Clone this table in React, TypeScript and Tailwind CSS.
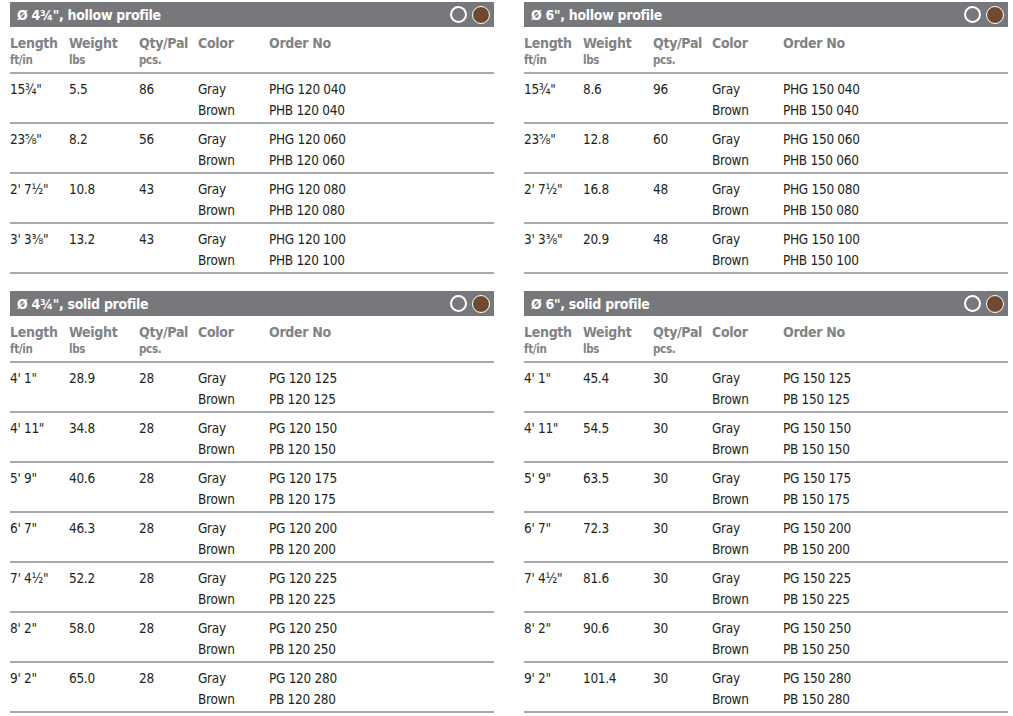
type Row = { len: string; wt: string; qty: string; g: string; b: string };

type Table = { title: string; rows: Row[] };

const mk = (len: string, wt: string, qty: string, g: string, b: string): Row => ({ len, wt, qty, g, b });

const left: Table[] = [
  {
    title: "Ø 4¾\", hollow profile",
    rows: [
      mk("15¾\"", "5.5", "86", "PHG 120 040", "PHB 120 040"),
      mk("23⅝\"", "8.2", "56", "PHG 120 060", "PHB 120 060"),
      mk("2' 7½\"", "10.8", "43", "PHG 120 080", "PHB 120 080"),
      mk("3' 3⅜\"", "13.2", "43", "PHG 120 100", "PHB 120 100"),
    ],
  },
  {
    title: "Ø 4¾\", solid profile",
    rows: [
      mk("4' 1\"", "28.9", "28", "PG 120 125", "PB 120 125"),
      mk("4' 11\"", "34.8", "28", "PG 120 150", "PB 120 150"),
      mk("5' 9\"", "40.6", "28", "PG 120 175", "PB 120 175"),
      mk("6' 7\"", "46.3", "28", "PG 120 200", "PB 120 200"),
      mk("7' 4½\"", "52.2", "28", "PG 120 225", "PB 120 225"),
      mk("8' 2\"", "58.0", "28", "PG 120 250", "PB 120 250"),
      mk("9' 2\"", "65.0", "28", "PG 120 280", "PB 120 280"),
    ],
  },
];

const right: Table[] = [
  {
    title: "Ø 6\", hollow profile",
    rows: [
      mk("15¾\"", "8.6", "96", "PHG 150 040", "PHB 150 040"),
      mk("23⅝\"", "12.8", "60", "PHG 150 060", "PHB 150 060"),
      mk("2' 7½\"", "16.8", "48", "PHG 150 080", "PHB 150 080"),
      mk("3' 3⅜\"", "20.9", "48", "PHG 150 100", "PHB 150 100"),
    ],
  },
  {
    title: "Ø 6\", solid profile",
    rows: [
      mk("4' 1\"", "45.4", "30", "PG 150 125", "PB 150 125"),
      mk("4' 11\"", "54.5", "30", "PG 150 150", "PB 150 150"),
      mk("5' 9\"", "63.5", "30", "PG 150 175", "PB 150 175"),
      mk("6' 7\"", "72.3", "30", "PG 150 200", "PB 150 200"),
      mk("7' 4½\"", "81.6", "30", "PG 150 225", "PB 150 225"),
      mk("8' 2\"", "90.6", "30", "PG 150 250", "PB 150 250"),
      mk("9' 2\"", "101.4", "30", "PG 150 280", "PB 150 280"),
    ],
  },
];

const cols = "grid grid-cols-[59px_70px_59px_71px_1fr]";

function ProfileTable({ t }: { t: Table }) {
  return (
    <section>
      <div className="h-[25px] bg-[#77787b] flex items-center justify-between pl-[7px] pr-[4px]">
        <h2 className="text-white font-bold text-[14px] tracking-[-0.3px] leading-none">{t.title}</h2>
        <div className="flex items-center gap-[5px]">
          <span className="size-[17px] rounded-full border-2 border-white bg-[#77787b]" />
          <span className="size-[18px] rounded-full border border-white bg-[#6f4a30]" />
        </div>
      </div>

      {/* column labels */}
      <div className={`${cols} h-[47px] pt-[8px] border-b-2 border-[#a7a9ac] text-[#808285] font-bold tracking-[-0.3px]`}>
        <div className="leading-[17px]"><div className="text-[14px]">Length</div><div className="text-[11.5px]">ft/in</div></div>
        <div className="leading-[17px]"><div className="text-[14px]">Weight</div><div className="text-[11.5px]">lbs</div></div>
        <div className="leading-[17px]"><div className="text-[14px]">Qty/Pal</div><div className="text-[11.5px]">pcs.</div></div>
        <div className="leading-[17px] text-[14px]">Color</div>
        <div className="leading-[17px] text-[14px]">Order No</div>
      </div>

      {t.rows.map((r) => (
        <div key={r.g} className={`${cols} h-[50px] pt-[5px] border-b-2 border-[#a7a9ac] text-[#231f20] text-[13.5px] tracking-[-0.3px] leading-[21px]`}>
          <div>{r.len}</div>
          <div>{r.wt}</div>
          <div>{r.qty}</div>
          <div><div>Gray</div><div>Brown</div></div>
          <div><div>{r.g}</div><div>{r.b}</div></div>
        </div>
      ))}
    </section>
  );
}

export default function App() {
  return (
    <div
      className="w-[1013px] h-[716px] bg-white pl-[10px] pr-[5px] pt-[2px] grid grid-cols-2 gap-x-[30px] overflow-hidden"
      style={{ fontFamily: '"DejaVu Sans Condensed", "DejaVu Sans", sans-serif' }}
    >
      {[left, right].map((side, i) => (
        <div key={i} className="flex flex-col gap-[17px]">
          {side.map((t) => (
            <ProfileTable key={t.title} t={t} />
          ))}
        </div>
      ))}
    </div>
  );
}
